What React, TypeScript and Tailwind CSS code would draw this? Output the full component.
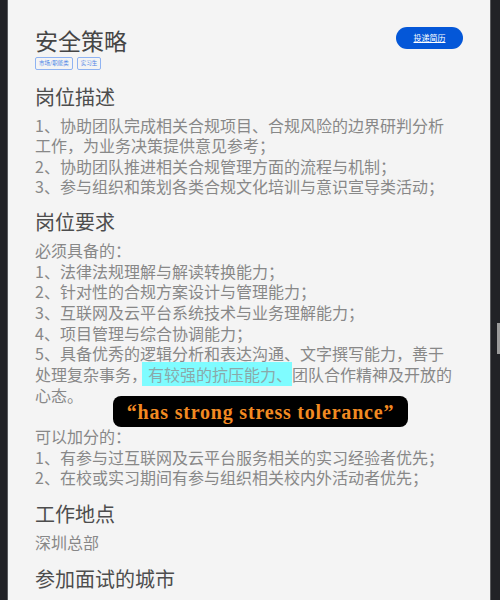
const body = "text-[16px] leading-[20.65px] text-[#888888]";
const heading = "text-[20px] leading-[26px] text-[#4d4d4d]";

export default function App() {
  return (
    <div
      className="flex h-[600px] w-[500px] overflow-hidden bg-[#212226]"
      style={{ fontFamily: '"Noto Sans CJK SC", "Noto Sans", sans-serif' }}
    >
      <div className="w-[7px] shrink-0" />
      <div className="w-px shrink-0 bg-[#5a5b5e]" />

      <main className="relative flex-1 bg-[#f4f4f4] px-[27px] pt-[26px]">
        <div className="flex items-start justify-between">
          <h1 className="text-[23px] leading-[28px] text-[#454545]">安全策略</h1>
          <button className="mt-[1px] flex h-[22px] w-[67px] items-center justify-center rounded-full bg-[#0457d8] text-[8px] text-white underline">
            投递简历
          </button>
        </div>

        <div className="mt-[3px] flex gap-[4px]">
          <span className="flex h-[13px] items-center rounded-[2px] border border-[#8fb3f2] px-[3px] text-[5.5px] text-[#4f86e6]">
            市场/职能类
          </span>
          <span className="flex h-[13px] items-center rounded-[2px] border border-[#8fb3f2] px-[3px] text-[5.5px] text-[#4f86e6]">
            实习生
          </span>
        </div>

        <div className="pr-[5px]">
          <h2 className={`mt-[14px] ${heading}`}>岗位描述</h2>
          <div className={`mt-[4.5px] ${body}`}>
            <p>1、协助团队完成相关合规项目、合规风险的边界研判分析工作，为业务决策提供意见参考；</p>
            <p>2、协助团队推进相关合规管理方面的流程与机制；</p>
            <p>3、参与组织和策划各类合规文化培训与意识宣导类活动；</p>
          </div>

          <h2 className={`mt-[11.5px] ${heading}`}>岗位要求</h2>
          <div className={`mt-[5.5px] ${body}`}>
            <p>必须具备的：</p>
            <p>1、法律法规理解与解读转换能力；</p>
            <p>2、针对性的合规方案设计与管理能力；</p>
            <p>3、互联网及云平台系统技术与业务理解能力；</p>
            <p>4、项目管理与综合协调能力；</p>
            <p>
              5、具备优秀的逻辑分析和表达沟通、文字撰写能力，善于处理复杂事务，
              <span className="-ml-[5px] bg-[#7ffcff] pl-[6px] text-[#8aa9aa]">有较强的抗压能力、</span>
              团队合作精神及开放的心态。
            </p>
            <p className="h-[20.65px]" />
            <p>可以加分的：</p>
            <p>1、有参与过互联网及云平台服务相关的实习经验者优先；</p>
            <p>2、在校或实习期间有参与组织相关校内外活动者优先；</p>
          </div>

          <h2 className={`mt-[12.7px] ${heading}`}>工作地点</h2>
          <p className={`mt-[5.7px] ${body}`}>深圳总部</p>

          <h2 className={`mt-[12.7px] ${heading}`}>参加面试的城市</h2>
        </div>

        <div
          className="absolute left-[105px] top-[396px] flex h-[31px] w-[295px] items-center justify-center rounded-[8px] bg-black text-[20px] font-bold tracking-[0.8px] text-[#f28a22]"
          style={{ fontFamily: '"Liberation Serif", "DejaVu Serif", serif' }}
        >
          “has strong stress tolerance”
        </div>
      </main>

      <div className="w-px shrink-0 bg-[#5a5b5e]" />
      <div className="flex w-[9px] shrink-0 justify-end">
        <div className="mt-[323px] h-[31px] w-[3px] bg-[#9a9a9a]" />
      </div>
    </div>
  );
}
